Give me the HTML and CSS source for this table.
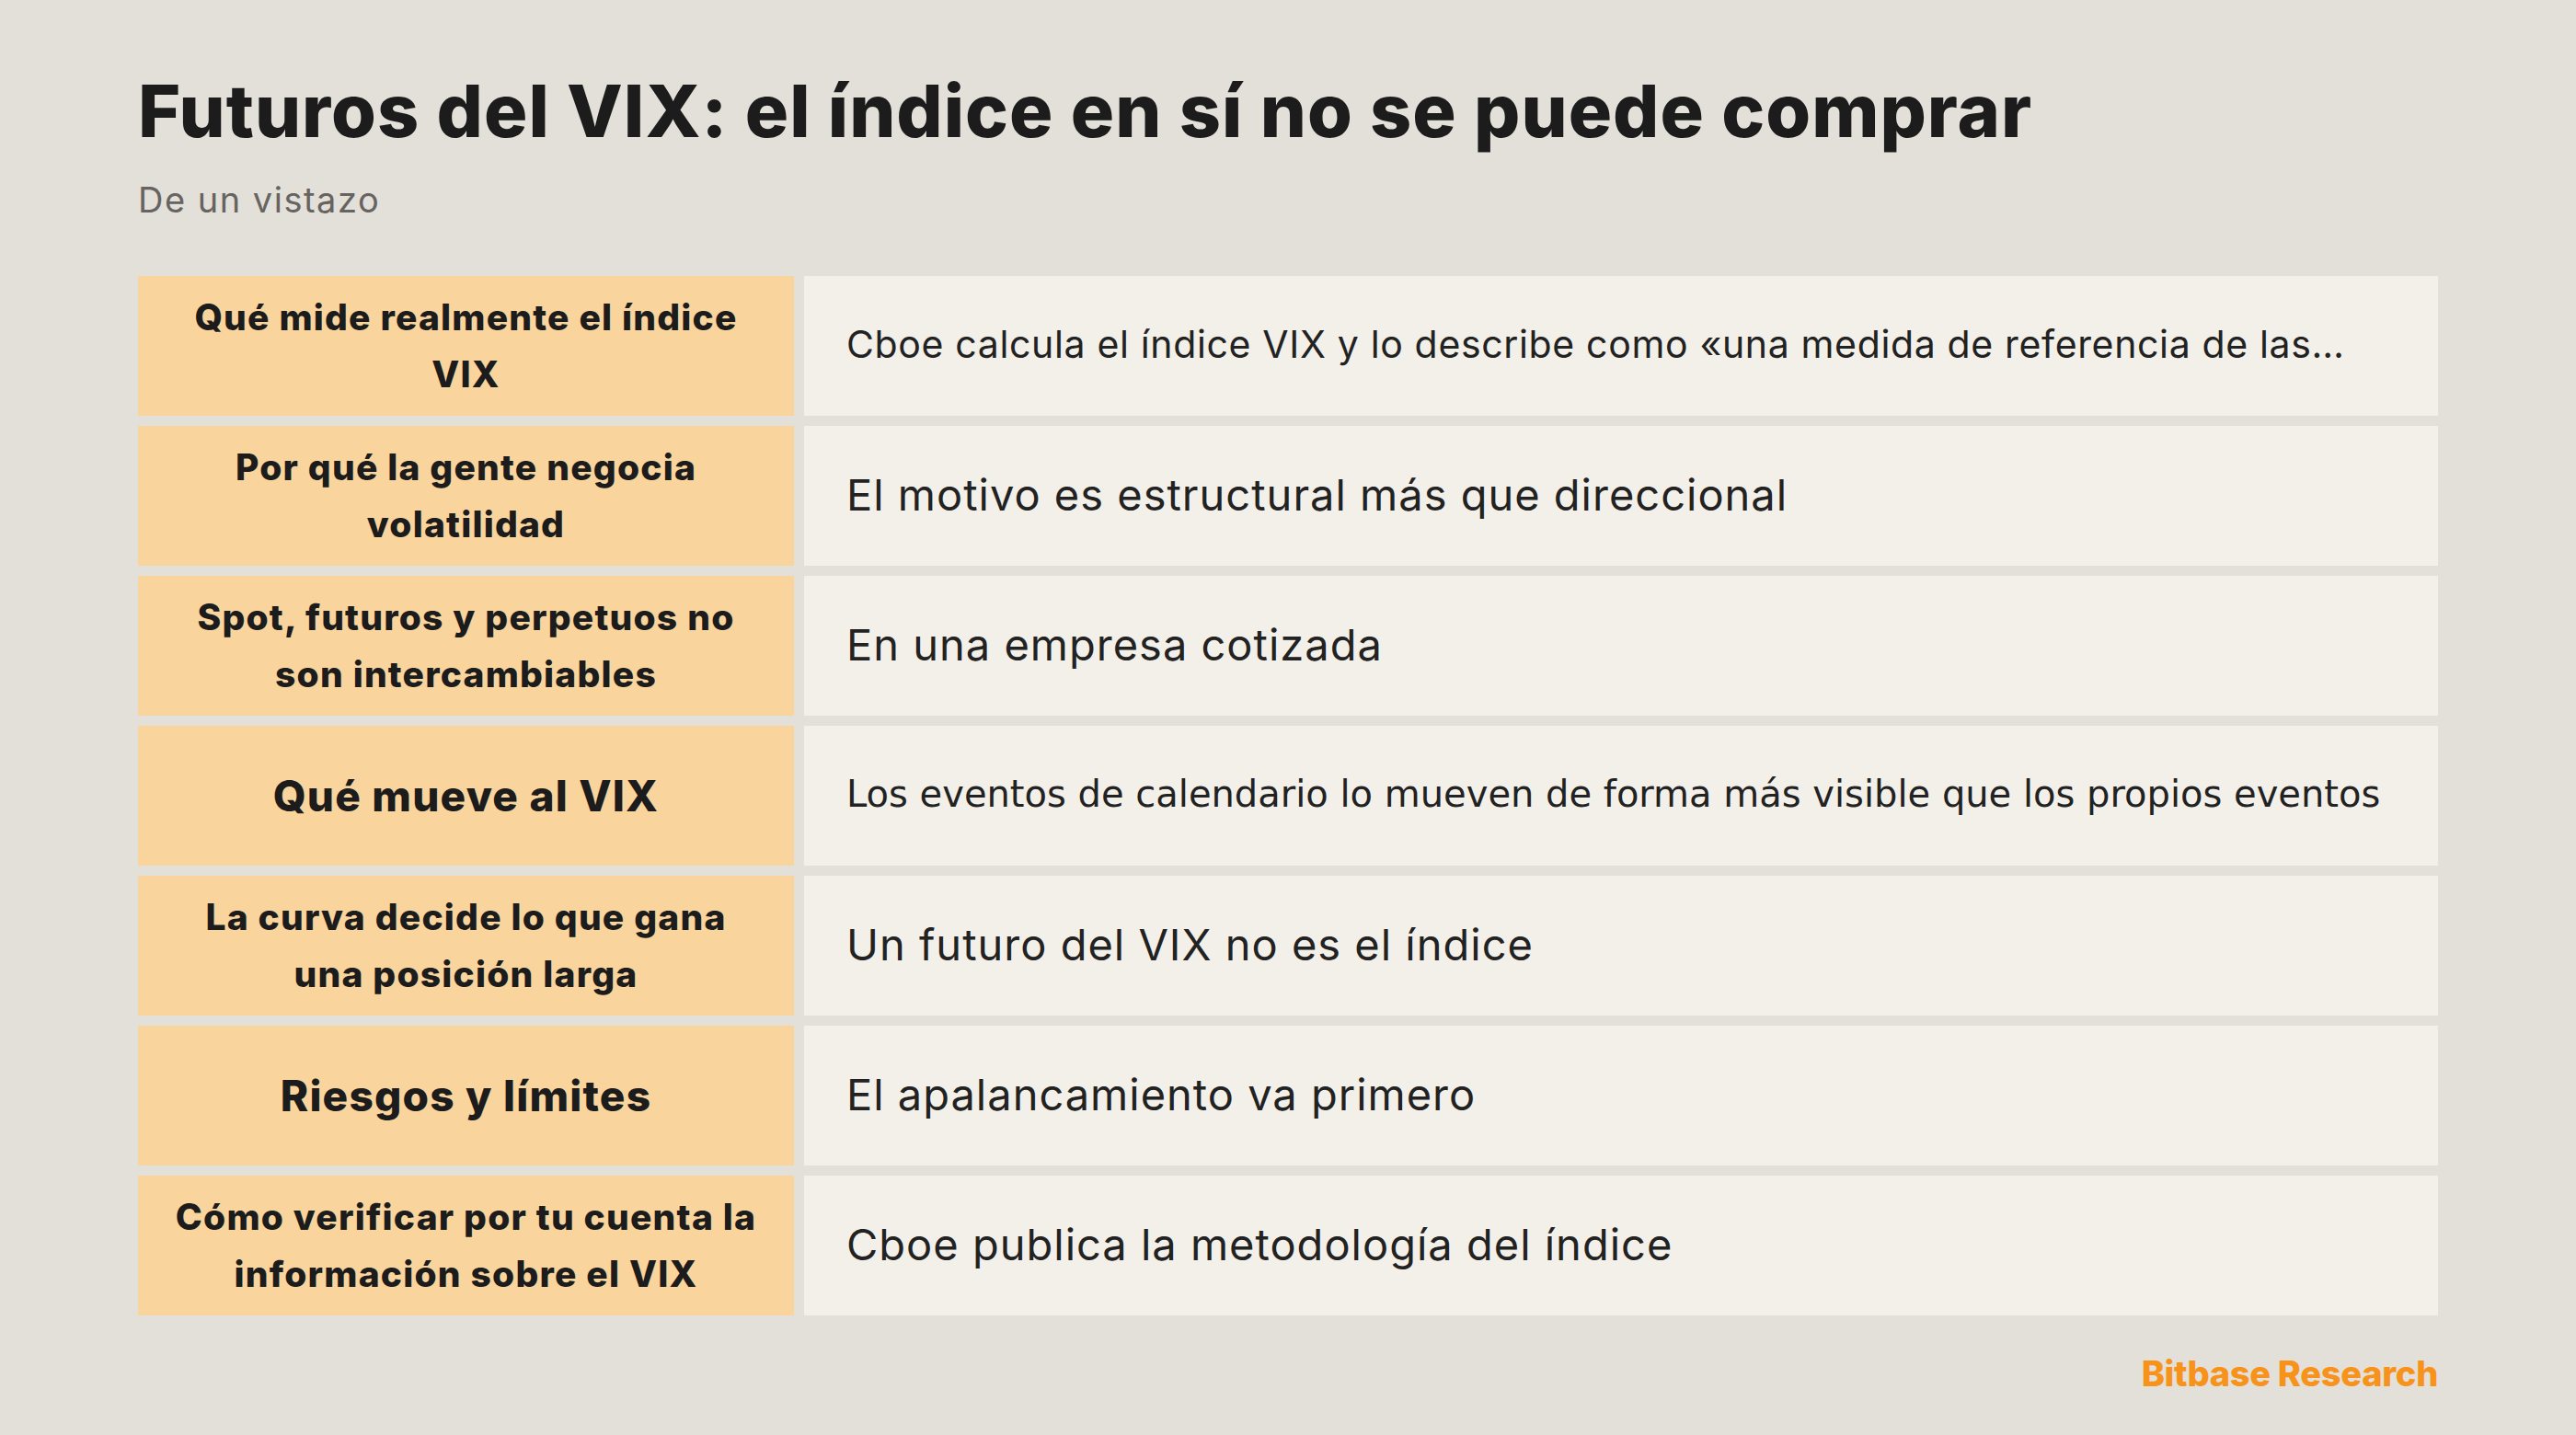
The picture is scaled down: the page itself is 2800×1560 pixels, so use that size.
FILE: index.html
```html
<!DOCTYPE html>
<html lang="es">
<head>
<meta charset="utf-8">
<title>Futuros del VIX</title>
<link rel="stylesheet" href="styles.css">
</head>
<body>
<main class="page">
  <header class="head">
    <h1 class="title">Futuros del VIX: el índice en sí no se puede comprar</h1>
    <p class="subtitle">De un vistazo</p>
  </header>
  <section class="table">
    <div class="row">
      <div class="label">Qué mide realmente el índice<br>VIX</div>
      <div class="value value-sm">Cboe calcula el índice VIX y lo describe como «una medida de referencia de las…</div>
    </div>
    <div class="row">
      <div class="label">Por qué la gente negocia<br>volatilidad</div>
      <div class="value">El motivo es estructural más que direccional</div>
    </div>
    <div class="row">
      <div class="label">Spot, futuros y perpetuos no<br>son intercambiables</div>
      <div class="value">En una empresa cotizada</div>
    </div>
    <div class="row">
      <div class="label label-lg">Qué mueve al VIX</div>
      <div class="value value-alt">Los eventos de calendario lo mueven de forma más visible que los propios eventos</div>
    </div>
    <div class="row">
      <div class="label">La curva decide lo que gana<br>una posición larga</div>
      <div class="value">Un futuro del VIX no es el índice</div>
    </div>
    <div class="row">
      <div class="label label-lg">Riesgos y límites</div>
      <div class="value">El apalancamiento va primero</div>
    </div>
    <div class="row">
      <div class="label">Cómo verificar por tu cuenta la<br>información sobre el VIX</div>
      <div class="value">Cboe publica la metodología del índice</div>
    </div>
  </section>
  <footer class="foot">Bitbase Research</footer>
</main>
</body>
</html>
```
FILE: styles.css
```css
* { box-sizing: border-box; }
html, body {
  margin: 0;
  padding: 0;
  background: #e3dfd9;
}
body {
  font-family: "Inter", "Noto Sans", sans-serif;
  color: #1c1c1c;
  width: 2800px;
  height: 1560px;
  overflow: hidden;
}
.page {
  padding: 72px 150px 0 150px;
  display: flex;
  flex-direction: column;
}
.title {
  margin: 0;
  font-weight: 800;
  font-size: 79px;
  line-height: 96px;
  letter-spacing: 1px;
  color: #1c1c1c;
}
.subtitle {
  margin: 26px 0 0 0;
  font-size: 38px;
  line-height: 46px;
  letter-spacing: 1.5px;
  color: #666360;
  font-weight: 400;
}
.table {
  margin-top: 60px;
  display: flex;
  flex-direction: column;
  gap: 11px;
}
.row {
  display: grid;
  grid-template-columns: 713px 1fr;
  column-gap: 11px;
  height: 152px;
}
.label {
  background: #f9d49d;
  display: flex;
  align-items: center;
  justify-content: center;
  text-align: center;
  font-weight: 800;
  font-size: 39px;
  line-height: 62px;
  letter-spacing: 1.2px;
  padding: 0 10px;
}
.label-lg {
  font-size: 46px;
  letter-spacing: 1.2px;
}
.value {
  background: #f3f0e9;
  display: flex;
  align-items: center;
  padding: 0 40px 4px 46px;
  font-size: 47px;
  font-weight: 400;
  letter-spacing: 1px;
  color: #222;
  white-space: nowrap;
  overflow: hidden;
}
.value-sm {
  font-size: 41px;
  letter-spacing: 0.65px;
}
.value-alt {
  font-family: "DejaVu Sans", sans-serif;
  font-size: 40px;
  letter-spacing: 0;
}
.foot {
  margin-top: 39px;
  align-self: flex-end;
  font-weight: 800;
  font-size: 38px;
  line-height: 48px;
  letter-spacing: -0.3px;
  color: #f7931a;
}
```
